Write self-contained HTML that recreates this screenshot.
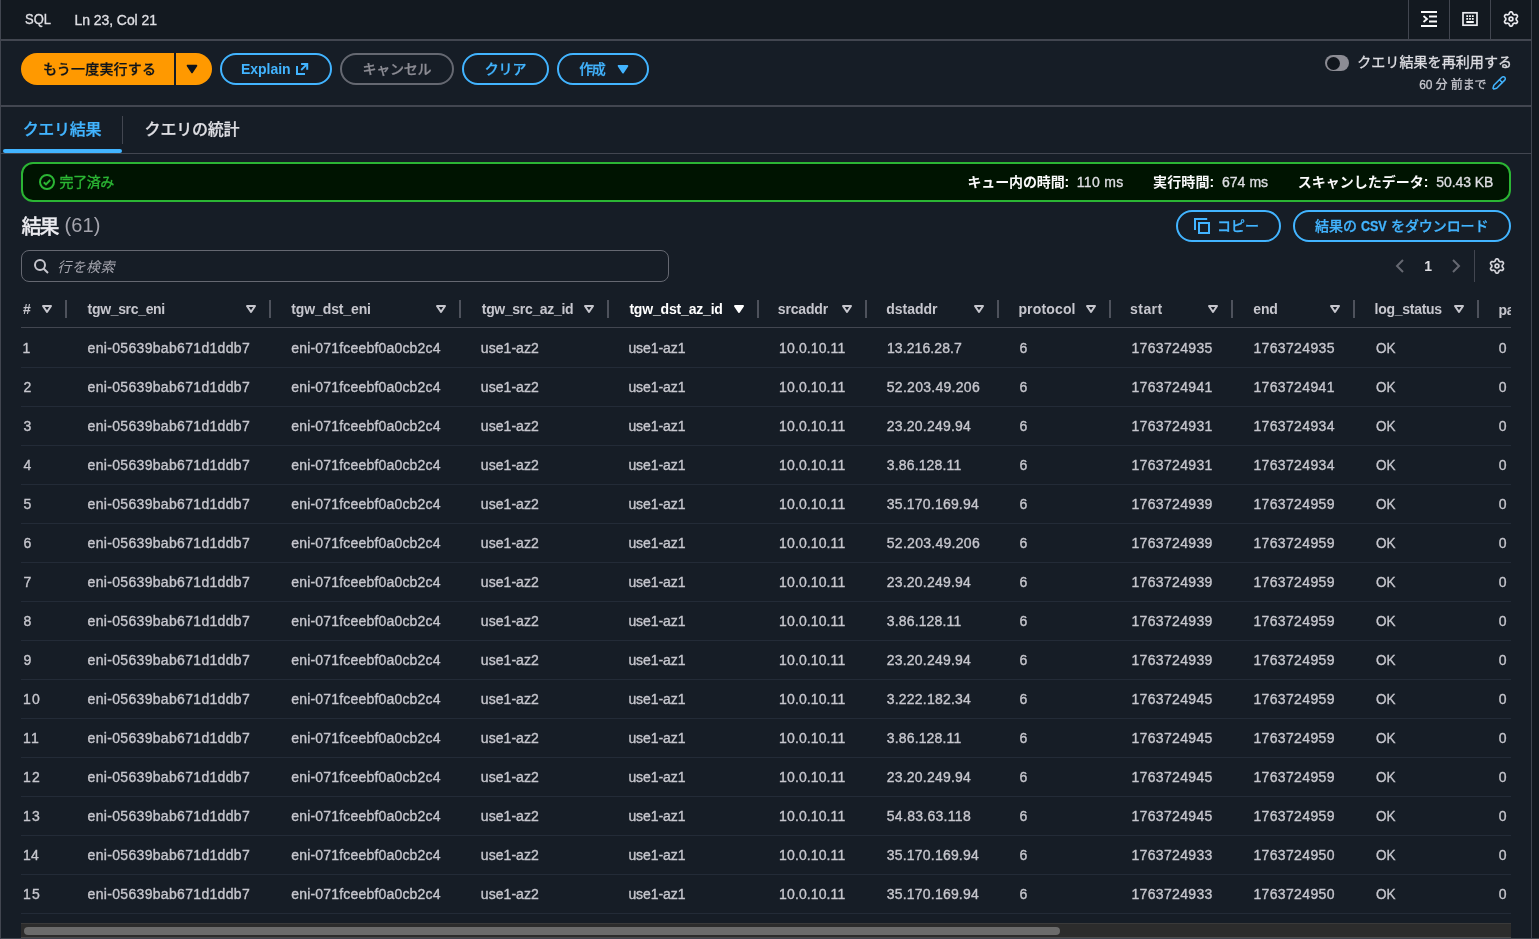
<!DOCTYPE html>
<html lang="ja">
<head>
<meta charset="utf-8">
<title>Athena</title>
<style>
*{box-sizing:border-box;margin:0;padding:0}
html,body{width:1539px;height:939px;overflow:hidden;background:#161d26}
body{font-family:"Liberation Sans","Noto Sans CJK JP",sans-serif;font-size:14px;color:#c6c6cd;position:relative}
.t{position:absolute;height:40px;line-height:40px;white-space:nowrap}
body{will-change:transform}
i{display:block;font-style:normal}
svg{position:absolute;overflow:visible}
#statusbar{position:absolute;left:0;top:0;width:1532px;height:41px;background:#131920;border-bottom:2px solid #424650}
.vs{position:absolute;top:0;width:1px;height:39px;background:#424650}
#leftb{position:absolute;left:0;top:0;width:1px;height:939px;background:#424650}
#rightb{position:absolute;left:1531px;top:0;width:1px;height:939px;background:#424650}
#rightpane{position:absolute;left:1532px;top:0;width:7px;height:939px;background:#131920}
.hl{position:absolute;left:1px;width:1530px;background:#424650}
.btn{position:absolute;height:32px;border:2px solid #42b4ff;border-radius:16px}
.btn.dis{border-color:#656871}
.btn.pri{background:#ff9900;border:0}
#tabul{position:absolute;left:3px;top:149px;width:119px;height:4px;border-radius:2px;background:#42b4ff}
#tabdv{position:absolute;left:122px;top:116px;width:1px;height:28px;background:#424650}
#toggle{position:absolute;left:1325px;top:55px;width:24px;height:16px;border-radius:8px;background:#8c8c94}
#toggle i{position:absolute;left:1.5px;top:1.5px;width:13px;height:13px;border-radius:7px;background:#11161d}
#flash{position:absolute;left:21px;top:162px;width:1490px;height:40px;border:2px solid #2bb534;border-radius:12px;background:#001401}
#search{position:absolute;left:21px;top:250px;width:648px;height:32px;border:1px solid #656871;border-radius:8px;background:#161d26}
#pgdv{position:absolute;left:1474px;top:250px;width:1px;height:32px;background:#424650}
#tablewrap{position:absolute;left:21px;top:290px;width:1490px;height:649px;overflow:hidden}
.thead{position:absolute;left:0;top:0;width:1490px;height:38px;border-bottom:1px solid #424650}
.caret{top:11px;width:16px;height:16px}
.dv{position:absolute;top:10px;width:2px;height:18px;background:#4e525c}
.tr{position:absolute;left:0;width:1490px;height:39px;border-bottom:1px solid #232b37}
.hscroll{position:absolute;left:0;top:633px;width:1490px;height:15px;background:#2c2c2c;border-top:1px solid #3a3a3a;border-bottom:1px solid #4a4a4a}
.hscroll i{position:absolute;left:3px;top:3px;width:1036px;height:8px;border-radius:4px;background:#6b6b6b}
#bottomb{position:absolute;left:0;top:938px;width:1539px;height:1px;background:#424650}
</style>
</head>
<body>
<div id="statusbar">
<i class="vs" style="left:1408px"></i><i class="vs" style="left:1449px"></i><i class="vs" style="left:1490px"></i>
<svg style="left:1421px;top:11px" width="16" height="16" viewBox="0 0 16 16" fill="none" stroke="#f9f9fa" stroke-width="2"><path d="M0 1h16M8 5.5h8M8 10.5h8M0 15h16"/><path d="M2.5 5l3.5 3-3.500 3" stroke-width="1.8"/></svg>
<svg style="left:1462px;top:11px" width="16" height="16" viewBox="0 0 16 16" fill="none" stroke="#f9f9fa" stroke-width="2"><rect x="1" y="1.800" width="14" height="12.400" stroke-width="1.700" stroke="#ebebf0"/><path d="M4.300 5.100h1.800M7.100 5.100h1.800M9.900 5.100h1.800M4.300 7.900h1.800M7.100 7.900h1.800M9.900 7.900h1.800M4.300 11h7.500" stroke-width="1.800"/></svg>
<svg style="left:1503px;top:11px" width="16" height="16" viewBox="0 0 16 16" fill="none" stroke="#ebebf0" stroke-width="1.7" stroke-linejoin="round"><path d="M13.20 8.00 L13.19 7.66 L13.20 7.32 L13.55 6.90 L13.94 6.41 L14.29 5.87 L14.52 5.30 L14.37 4.86 L14.15 4.45 L13.90 4.06 L13.60 3.70 L12.99 3.62 L12.35 3.65 L11.73 3.75 L11.19 3.84 L10.89 3.68 L10.60 3.50 L10.30 3.34 L10.01 3.16 L9.82 2.64 L9.59 2.06 L9.30 1.49 L8.92 1.00 L8.46 0.92 L8.00 0.90 L7.54 0.92 L7.08 1.00 L6.70 1.49 L6.41 2.06 L6.18 2.64 L5.99 3.16 L5.70 3.34 L5.40 3.50 L5.11 3.68 L4.81 3.84 L4.27 3.75 L3.65 3.65 L3.01 3.62 L2.40 3.70 L2.10 4.06 L1.85 4.45 L1.63 4.86 L1.48 5.30 L1.71 5.87 L2.06 6.41 L2.45 6.90 L2.80 7.32 L2.81 7.66 L2.80 8.00 L2.81 8.34 L2.80 8.68 L2.45 9.10 L2.06 9.59 L1.71 10.13 L1.48 10.70 L1.63 11.14 L1.85 11.55 L2.10 11.94 L2.40 12.30 L3.01 12.38 L3.65 12.35 L4.27 12.25 L4.81 12.16 L5.11 12.32 L5.40 12.50 L5.70 12.66 L5.99 12.84 L6.18 13.36 L6.41 13.94 L6.70 14.51 L7.08 15.00 L7.54 15.08 L8.00 15.10 L8.46 15.08 L8.92 15.00 L9.30 14.51 L9.59 13.94 L9.82 13.36 L10.01 12.84 L10.30 12.66 L10.60 12.50 L10.89 12.32 L11.19 12.16 L11.73 12.25 L12.35 12.35 L12.99 12.38 L13.60 12.30 L13.90 11.94 L14.15 11.55 L14.37 11.14 L14.52 10.70 L14.29 10.13 L13.94 9.59 L13.55 9.10 L13.20 8.68 L13.19 8.34Z"/><circle cx="8" cy="8" r="1.900"/></svg>
</div>
<div id="leftb"></div>
<i class="hl" style="top:105px;height:2px"></i>
<i class="hl" style="top:153px;height:1px"></i>
<div class="btn pri" style="left:21px;top:53px;width:153px;border-radius:16px 0 0 16px"></div>
<div class="btn pri" style="left:176px;top:53px;width:36px;border-radius:0 16px 16px 0"></div>
<svg style="left:184px;top:61px" width="16" height="16" viewBox="0 0 16 16"><path d="M3.700 4.700h8.600L8 11.300z" fill="#0f141a" stroke="#0f141a" stroke-width="2" stroke-linejoin="round"/></svg>
<div class="btn" style="left:220px;top:53px;width:112px"></div>
<svg style="left:294px;top:61px" width="16" height="16" viewBox="0 0 16 16" fill="none" stroke="#42b4ff" stroke-width="2"><path d="M3 5v8h8M7.100 3h6.100v5.800"/><path d="M7.200 9L13.200 3" stroke-width="1.8"/></svg>
<div class="btn dis" style="left:340px;top:53px;width:114px"></div>
<div class="btn" style="left:462px;top:53px;width:87px"></div>
<div class="btn" style="left:557px;top:53px;width:92px"></div>
<svg style="left:615px;top:61px" width="16" height="16" viewBox="0 0 16 16"><path d="M3.700 4.900h8.600L8 11.500z" fill="#42b4ff" stroke="#42b4ff" stroke-width="2" stroke-linejoin="round"/></svg>
<div id="toggle"><i></i></div>
<svg style="left:1491px;top:75px" width="16" height="16" viewBox="0 0 16 16" fill="none" stroke="#42b4ff" stroke-width="1.5" stroke-linejoin="round" stroke-linecap="round"><path d="M1.99 13.30L2.84 10.33L10.90 2.27A2.0 2.0 0 0 1 13.73 5.10L5.67 13.16L2.70 14.01Z"/><path d="M8.50 4.68L11.32 7.50" stroke-width="1.400"/></svg>
<div id="tabul"></div><div id="tabdv"></div>
<div id="flash"></div>
<svg style="left:39px;top:174px" width="16" height="16" viewBox="0 0 16 16" fill="none" stroke="#2bb534" stroke-width="2"><circle cx="8" cy="8" r="7"/><path d="M4.800 8.200l2.200 2.200 4.200-4.400"/></svg>
<div class="btn" style="left:1176px;top:210px;width:105px"></div>
<svg style="left:1194px;top:218px" width="16" height="16" viewBox="0 0 16 16" fill="none" stroke="#42b4ff" stroke-width="2"><path d="M5 5h10v10H5z"/><path d="M13.200 1H1v11"/></svg>
<div class="btn" style="left:1293px;top:210px;width:218px"></div>
<div id="search"></div>
<svg style="left:33px;top:258px" width="16" height="16" viewBox="0 0 16 16" fill="none" stroke="#c6c6cd" stroke-width="2"><circle cx="7" cy="7" r="5"/><path d="M15 15l-4.500-4.500"/></svg>
<svg style="left:1392px;top:258px" width="16" height="16" viewBox="0 0 16 16" fill="none" stroke="#656871" stroke-width="2"><path d="M11 2L5 8l6 6"/></svg>
<svg style="left:1448px;top:258px" width="16" height="16" viewBox="0 0 16 16" fill="none" stroke="#656871" stroke-width="2"><path d="M5 2l6 6-6 6"/></svg>
<div id="pgdv"></div>
<svg style="left:1489px;top:258px" width="16" height="16" viewBox="0 0 16 16" fill="none" stroke="#d5d5db" stroke-width="1.7" stroke-linejoin="round"><path d="M13.20 8.00 L13.19 7.66 L13.20 7.32 L13.55 6.90 L13.94 6.41 L14.29 5.87 L14.52 5.30 L14.37 4.86 L14.15 4.45 L13.90 4.06 L13.60 3.70 L12.99 3.62 L12.35 3.65 L11.73 3.75 L11.19 3.84 L10.89 3.68 L10.60 3.50 L10.30 3.34 L10.01 3.16 L9.82 2.64 L9.59 2.06 L9.30 1.49 L8.92 1.00 L8.46 0.92 L8.00 0.90 L7.54 0.92 L7.08 1.00 L6.70 1.49 L6.41 2.06 L6.18 2.64 L5.99 3.16 L5.70 3.34 L5.40 3.50 L5.11 3.68 L4.81 3.84 L4.27 3.75 L3.65 3.65 L3.01 3.62 L2.40 3.70 L2.10 4.06 L1.85 4.45 L1.63 4.86 L1.48 5.30 L1.71 5.87 L2.06 6.41 L2.45 6.90 L2.80 7.32 L2.81 7.66 L2.80 8.00 L2.81 8.34 L2.80 8.68 L2.45 9.10 L2.06 9.59 L1.71 10.13 L1.48 10.70 L1.63 11.14 L1.85 11.55 L2.10 11.94 L2.40 12.30 L3.01 12.38 L3.65 12.35 L4.27 12.25 L4.81 12.16 L5.11 12.32 L5.40 12.50 L5.70 12.66 L5.99 12.84 L6.18 13.36 L6.41 13.94 L6.70 14.51 L7.08 15.00 L7.54 15.08 L8.00 15.10 L8.46 15.08 L8.92 15.00 L9.30 14.51 L9.59 13.94 L9.82 13.36 L10.01 12.84 L10.30 12.66 L10.60 12.50 L10.89 12.32 L11.19 12.16 L11.73 12.25 L12.35 12.35 L12.99 12.38 L13.60 12.30 L13.90 11.94 L14.15 11.55 L14.37 11.14 L14.52 10.70 L14.29 10.13 L13.94 9.59 L13.55 9.10 L13.20 8.68 L13.19 8.34Z"/><circle cx="8" cy="8" r="1.900"/></svg>
<div id="rightpane"></div><div id="rightb"></div><div id="bottomb"></div>
<span class="t" style="left:25.4px;top:-0.8px;font-size:14px;-webkit-text-stroke:0.35px;color:#dedee3;transform:scaleX(0.929);transform-origin:0 50%;">SQL</span>
<span class="t" style="left:74.6px;top:0.2px;font-size:14px;-webkit-text-stroke:0.35px;color:#dedee3;letter-spacing:-0.08px;">Ln 23, Col 21</span>
<span class="t" style="left:43.0px;top:49.0px;font-size:14px;font-weight:500;-webkit-text-stroke:0.25px;color:#0f141a;letter-spacing:0.2px;">もう一度実行する</span>
<span class="t" style="left:241.0px;top:49.0px;font-size:14px;font-weight:bold;color:#42b4ff;letter-spacing:-0.03px;">Explain</span>
<span class="t" style="left:362.6px;top:48.5px;font-size:14px;font-weight:500;-webkit-text-stroke:0.25px;color:#8c8c94;letter-spacing:-0.3px;">キャンセル</span>
<span class="t" style="left:484.7px;top:49.0px;font-size:14px;font-weight:500;-webkit-text-stroke:0.25px;color:#42b4ff;letter-spacing:-0.1px;">クリア</span>
<span class="t" style="left:579.3px;top:49.0px;font-size:14px;font-weight:500;-webkit-text-stroke:0.25px;color:#42b4ff;letter-spacing:-1.5px;">作成</span>
<span class="t" style="left:1357.2px;top:42.2px;font-size:14px;-webkit-text-stroke:0.35px;color:#dedee3;letter-spacing:0.08px;">クエリ結果を再利用する</span>
<span class="t" style="left:1419.2px;top:64.8px;font-size:12px;-webkit-text-stroke:0.3px;color:#c6c6cd;letter-spacing:-0.09px;">60 分 前まで</span>
<span class="t" style="left:22.7px;top:110.4px;font-size:16px;font-weight:500;-webkit-text-stroke:0.25px;color:#42b4ff;letter-spacing:-0.32px;">クエリ結果</span>
<span class="t" style="left:144.6px;top:110.4px;font-size:16px;font-weight:500;-webkit-text-stroke:0.25px;color:#dedee3;letter-spacing:-0.2px;">クエリの統計</span>
<span class="t" style="left:59.6px;top:161.6px;font-size:14px;-webkit-text-stroke:0.35px;color:#2bb534;letter-spacing:-0.43px;">完了済み</span>
<span class="t" style="left:967.5px;top:162.0px;font-size:14px;font-weight:bold;color:#f9f9fa;letter-spacing:-0.14px;">キュー内の時間:</span>
<span class="t" style="left:1076.7px;top:162.0px;font-size:14px;-webkit-text-stroke:0.35px;color:#dedee3;letter-spacing:0.36px;">110 ms</span>
<span class="t" style="left:1153.1px;top:162.0px;font-size:14px;font-weight:bold;color:#f9f9fa;letter-spacing:0.1px;">実行時間:</span>
<span class="t" style="left:1221.9px;top:162.0px;font-size:14px;-webkit-text-stroke:0.35px;color:#dedee3;letter-spacing:0.06px;">674 ms</span>
<span class="t" style="left:1297.8px;top:162.0px;font-size:14px;font-weight:bold;color:#f9f9fa;letter-spacing:-0.01px;">スキャンしたデータ:</span>
<span class="t" style="left:1436.3px;top:162.0px;font-size:14px;-webkit-text-stroke:0.35px;color:#dedee3;letter-spacing:-0.07px;">50.43 KB</span>
<span class="t" style="left:21.5px;top:207.0px;font-size:20px;font-weight:500;-webkit-text-stroke:0.3px;color:#ebebf0;letter-spacing:-2.0px;">結果</span>
<span class="t" style="left:64.5px;top:205.0px;font-size:20px;color:#a4a4ad;letter-spacing:0.1px;">(61)</span>
<span class="t" style="left:1217.0px;top:205.5px;font-size:14px;font-weight:500;-webkit-text-stroke:0.25px;color:#42b4ff;letter-spacing:-0.05px;">コピー</span>
<span class="t" style="left:1315.0px;top:206.0px;font-size:14px;font-weight:500;-webkit-text-stroke:0.25px;color:#42b4ff;">結果の</span>
<span class="t" style="left:1361.3px;top:206.0px;font-size:14px;font-weight:bold;-webkit-text-stroke:0.3px;color:#42b4ff;transform:scaleX(0.893);transform-origin:0 50%;">CSV</span>
<span class="t" style="left:1391.0px;top:206.0px;font-size:14px;font-weight:500;-webkit-text-stroke:0.25px;color:#42b4ff;letter-spacing:-0.08px;">をダウンロード</span>
<span class="t" style="left:1424.2px;top:246.3px;font-size:14px;font-weight:bold;color:#dedee3;">1</span>
<span class="t" style="left:57.3px;top:247.0px;font-size:14px;font-style:italic;color:#a4a4ad;letter-spacing:0.37px;">行を検索</span>
<div id="tablewrap">
<div class="thead">
<span class="t" style="left:1.9px;top:-1.0px;font-size:14px;font-weight:bold;color:#c6c6cd;">#</span><svg class="caret" style="left:17.9px" viewBox="0 0 16 16"><path d="M4 5h8l-4 6z" fill="none" stroke="#c6c6cd" stroke-width="2" stroke-linejoin="round"/></svg><i class="dv" style="left:44px"></i>
<span class="t" style="left:66.6px;top:-1.0px;font-size:14px;font-weight:bold;color:#c6c6cd;letter-spacing:-0.33px;">tgw_src_eni</span><svg class="caret" style="left:222.0px" viewBox="0 0 16 16"><path d="M4 5h8l-4 6z" fill="none" stroke="#c6c6cd" stroke-width="2" stroke-linejoin="round"/></svg><i class="dv" style="left:248px"></i>
<span class="t" style="left:270.3px;top:-1.0px;font-size:14px;font-weight:bold;color:#c6c6cd;letter-spacing:-0.12px;">tgw_dst_eni</span><svg class="caret" style="left:412.0px" viewBox="0 0 16 16"><path d="M4 5h8l-4 6z" fill="none" stroke="#c6c6cd" stroke-width="2" stroke-linejoin="round"/></svg><i class="dv" style="left:438px"></i>
<span class="t" style="left:460.8px;top:-1.0px;font-size:14px;font-weight:bold;color:#c6c6cd;letter-spacing:-0.33px;">tgw_src_az_id</span><svg class="caret" style="left:560.0px" viewBox="0 0 16 16"><path d="M4 5h8l-4 6z" fill="none" stroke="#c6c6cd" stroke-width="2" stroke-linejoin="round"/></svg><i class="dv" style="left:586px"></i>
<span class="t" style="left:608.4px;top:-1.0px;font-size:14px;font-weight:bold;color:#fff;letter-spacing:-0.18px;">tgw_dst_az_id</span><svg class="caret" style="left:710.0px" viewBox="0 0 16 16"><path d="M4 5h8l-4 6z" fill="#fff" stroke="#fff" stroke-width="2" stroke-linejoin="round"/></svg><i class="dv" style="left:736px"></i>
<span class="t" style="left:756.8px;top:-1.0px;font-size:14px;font-weight:bold;color:#c6c6cd;letter-spacing:-0.18px;">srcaddr</span><svg class="caret" style="left:817.7px" viewBox="0 0 16 16"><path d="M4 5h8l-4 6z" fill="none" stroke="#c6c6cd" stroke-width="2" stroke-linejoin="round"/></svg><i class="dv" style="left:844px"></i>
<span class="t" style="left:865.2px;top:-1.0px;font-size:14px;font-weight:bold;color:#c6c6cd;letter-spacing:-0.02px;">dstaddr</span><svg class="caret" style="left:949.8px" viewBox="0 0 16 16"><path d="M4 5h8l-4 6z" fill="none" stroke="#c6c6cd" stroke-width="2" stroke-linejoin="round"/></svg><i class="dv" style="left:976px"></i>
<span class="t" style="left:997.4px;top:-1.0px;font-size:14px;font-weight:bold;color:#c6c6cd;letter-spacing:0.16px;">protocol</span><svg class="caret" style="left:1062.1px" viewBox="0 0 16 16"><path d="M4 5h8l-4 6z" fill="none" stroke="#c6c6cd" stroke-width="2" stroke-linejoin="round"/></svg><i class="dv" style="left:1088px"></i>
<span class="t" style="left:1109.1px;top:-1.0px;font-size:14px;font-weight:bold;color:#c6c6cd;letter-spacing:0.43px;">start</span><svg class="caret" style="left:1183.9px" viewBox="0 0 16 16"><path d="M4 5h8l-4 6z" fill="none" stroke="#c6c6cd" stroke-width="2" stroke-linejoin="round"/></svg><i class="dv" style="left:1210px"></i>
<span class="t" style="left:1232.3px;top:-1.0px;font-size:14px;font-weight:bold;color:#c6c6cd;letter-spacing:-0.2px;">end</span><svg class="caret" style="left:1305.9px" viewBox="0 0 16 16"><path d="M4 5h8l-4 6z" fill="none" stroke="#c6c6cd" stroke-width="2" stroke-linejoin="round"/></svg><i class="dv" style="left:1332px"></i>
<span class="t" style="left:1353.6px;top:-1.0px;font-size:14px;font-weight:bold;color:#c6c6cd;letter-spacing:-0.28px;">log_status</span><svg class="caret" style="left:1429.8px" viewBox="0 0 16 16"><path d="M4 5h8l-4 6z" fill="none" stroke="#c6c6cd" stroke-width="2" stroke-linejoin="round"/></svg><i class="dv" style="left:1456px"></i>
<span class="t" style="left:1477.5px;top:-0.3px;font-size:14px;font-weight:bold;color:#c6c6cd;letter-spacing:-0.3px">pa</span>
</div>
<div class="tr" style="top:39px"><span class="t" style="left:1.4px;top:-0.8px;font-size:14px;-webkit-text-stroke:0.35px;color:#c6c6cd;">1</span><span class="t" style="left:66.6px;top:-0.8px;font-size:14px;-webkit-text-stroke:0.35px;color:#c6c6cd;letter-spacing:0.32px;">eni-05639bab671d1ddb7</span><span class="t" style="left:270.3px;top:-0.8px;font-size:14px;-webkit-text-stroke:0.35px;color:#c6c6cd;letter-spacing:0.18px;">eni-071fceebf0a0cb2c4</span><span class="t" style="left:459.8px;top:-0.8px;font-size:14px;-webkit-text-stroke:0.35px;color:#c6c6cd;letter-spacing:0.06px;">use1-az2</span><span class="t" style="left:607.4px;top:-0.8px;font-size:14px;-webkit-text-stroke:0.35px;color:#c6c6cd;letter-spacing:-0.06px;">use1-az1</span><span class="t" style="left:758.1px;top:-0.8px;font-size:14px;-webkit-text-stroke:0.35px;color:#c6c6cd;letter-spacing:0.11px;">10.0.10.11</span><span class="t" style="left:866.0px;top:-0.8px;font-size:14px;-webkit-text-stroke:0.35px;color:#c6c6cd;letter-spacing:0.08px;">13.216.28.7</span><span class="t" style="left:998.4px;top:-0.8px;font-size:14px;-webkit-text-stroke:0.35px;color:#c6c6cd;">6</span><span class="t" style="left:1110.4px;top:-0.8px;font-size:14px;-webkit-text-stroke:0.35px;color:#c6c6cd;letter-spacing:0.34px;">1763724935</span><span class="t" style="left:1232.4px;top:-0.8px;font-size:14px;-webkit-text-stroke:0.35px;color:#c6c6cd;letter-spacing:0.36px;">1763724935</span><span class="t" style="left:1354.6px;top:-0.8px;font-size:14px;-webkit-text-stroke:0.35px;color:#c6c6cd;transform:scaleX(0.965);transform-origin:0 50%;">OK</span><span class="t" style="left:1477.8px;top:-0.8px;font-size:14px;-webkit-text-stroke:0.35px;color:#c6c6cd;">0</span></div>
<div class="tr" style="top:78px"><span class="t" style="left:2.4px;top:-0.8px;font-size:14px;-webkit-text-stroke:0.35px;color:#c6c6cd;">2</span><span class="t" style="left:66.6px;top:-0.8px;font-size:14px;-webkit-text-stroke:0.35px;color:#c6c6cd;letter-spacing:0.32px;">eni-05639bab671d1ddb7</span><span class="t" style="left:270.3px;top:-0.8px;font-size:14px;-webkit-text-stroke:0.35px;color:#c6c6cd;letter-spacing:0.18px;">eni-071fceebf0a0cb2c4</span><span class="t" style="left:459.8px;top:-0.8px;font-size:14px;-webkit-text-stroke:0.35px;color:#c6c6cd;letter-spacing:0.06px;">use1-az2</span><span class="t" style="left:607.4px;top:-0.8px;font-size:14px;-webkit-text-stroke:0.35px;color:#c6c6cd;letter-spacing:-0.06px;">use1-az1</span><span class="t" style="left:758.1px;top:-0.8px;font-size:14px;-webkit-text-stroke:0.35px;color:#c6c6cd;letter-spacing:0.11px;">10.0.10.11</span><span class="t" style="left:865.8px;top:-0.8px;font-size:14px;-webkit-text-stroke:0.35px;color:#c6c6cd;letter-spacing:0.28px;">52.203.49.206</span><span class="t" style="left:998.4px;top:-0.8px;font-size:14px;-webkit-text-stroke:0.35px;color:#c6c6cd;">6</span><span class="t" style="left:1110.4px;top:-0.8px;font-size:14px;-webkit-text-stroke:0.35px;color:#c6c6cd;letter-spacing:0.34px;">1763724941</span><span class="t" style="left:1232.4px;top:-0.8px;font-size:14px;-webkit-text-stroke:0.35px;color:#c6c6cd;letter-spacing:0.36px;">1763724941</span><span class="t" style="left:1354.6px;top:-0.8px;font-size:14px;-webkit-text-stroke:0.35px;color:#c6c6cd;transform:scaleX(0.965);transform-origin:0 50%;">OK</span><span class="t" style="left:1477.8px;top:-0.8px;font-size:14px;-webkit-text-stroke:0.35px;color:#c6c6cd;">0</span></div>
<div class="tr" style="top:117px"><span class="t" style="left:2.4px;top:-0.8px;font-size:14px;-webkit-text-stroke:0.35px;color:#c6c6cd;">3</span><span class="t" style="left:66.6px;top:-0.8px;font-size:14px;-webkit-text-stroke:0.35px;color:#c6c6cd;letter-spacing:0.32px;">eni-05639bab671d1ddb7</span><span class="t" style="left:270.3px;top:-0.8px;font-size:14px;-webkit-text-stroke:0.35px;color:#c6c6cd;letter-spacing:0.18px;">eni-071fceebf0a0cb2c4</span><span class="t" style="left:459.8px;top:-0.8px;font-size:14px;-webkit-text-stroke:0.35px;color:#c6c6cd;letter-spacing:0.06px;">use1-az2</span><span class="t" style="left:607.4px;top:-0.8px;font-size:14px;-webkit-text-stroke:0.35px;color:#c6c6cd;letter-spacing:-0.06px;">use1-az1</span><span class="t" style="left:758.1px;top:-0.8px;font-size:14px;-webkit-text-stroke:0.35px;color:#c6c6cd;letter-spacing:0.11px;">10.0.10.11</span><span class="t" style="left:865.8px;top:-0.8px;font-size:14px;-webkit-text-stroke:0.35px;color:#c6c6cd;letter-spacing:0.2px;">23.20.249.94</span><span class="t" style="left:998.4px;top:-0.8px;font-size:14px;-webkit-text-stroke:0.35px;color:#c6c6cd;">6</span><span class="t" style="left:1110.4px;top:-0.8px;font-size:14px;-webkit-text-stroke:0.35px;color:#c6c6cd;letter-spacing:0.34px;">1763724931</span><span class="t" style="left:1232.4px;top:-0.8px;font-size:14px;-webkit-text-stroke:0.35px;color:#c6c6cd;letter-spacing:0.36px;">1763724934</span><span class="t" style="left:1354.6px;top:-0.8px;font-size:14px;-webkit-text-stroke:0.35px;color:#c6c6cd;transform:scaleX(0.965);transform-origin:0 50%;">OK</span><span class="t" style="left:1477.8px;top:-0.8px;font-size:14px;-webkit-text-stroke:0.35px;color:#c6c6cd;">0</span></div>
<div class="tr" style="top:156px"><span class="t" style="left:2.4px;top:-0.8px;font-size:14px;-webkit-text-stroke:0.35px;color:#c6c6cd;">4</span><span class="t" style="left:66.6px;top:-0.8px;font-size:14px;-webkit-text-stroke:0.35px;color:#c6c6cd;letter-spacing:0.32px;">eni-05639bab671d1ddb7</span><span class="t" style="left:270.3px;top:-0.8px;font-size:14px;-webkit-text-stroke:0.35px;color:#c6c6cd;letter-spacing:0.18px;">eni-071fceebf0a0cb2c4</span><span class="t" style="left:459.8px;top:-0.8px;font-size:14px;-webkit-text-stroke:0.35px;color:#c6c6cd;letter-spacing:0.06px;">use1-az2</span><span class="t" style="left:607.4px;top:-0.8px;font-size:14px;-webkit-text-stroke:0.35px;color:#c6c6cd;letter-spacing:-0.06px;">use1-az1</span><span class="t" style="left:758.1px;top:-0.8px;font-size:14px;-webkit-text-stroke:0.35px;color:#c6c6cd;letter-spacing:0.11px;">10.0.10.11</span><span class="t" style="left:865.8px;top:-0.8px;font-size:14px;-webkit-text-stroke:0.35px;color:#c6c6cd;letter-spacing:0.15px;">3.86.128.11</span><span class="t" style="left:998.4px;top:-0.8px;font-size:14px;-webkit-text-stroke:0.35px;color:#c6c6cd;">6</span><span class="t" style="left:1110.4px;top:-0.8px;font-size:14px;-webkit-text-stroke:0.35px;color:#c6c6cd;letter-spacing:0.34px;">1763724931</span><span class="t" style="left:1232.4px;top:-0.8px;font-size:14px;-webkit-text-stroke:0.35px;color:#c6c6cd;letter-spacing:0.36px;">1763724934</span><span class="t" style="left:1354.6px;top:-0.8px;font-size:14px;-webkit-text-stroke:0.35px;color:#c6c6cd;transform:scaleX(0.965);transform-origin:0 50%;">OK</span><span class="t" style="left:1477.8px;top:-0.8px;font-size:14px;-webkit-text-stroke:0.35px;color:#c6c6cd;">0</span></div>
<div class="tr" style="top:195px"><span class="t" style="left:2.4px;top:-0.8px;font-size:14px;-webkit-text-stroke:0.35px;color:#c6c6cd;">5</span><span class="t" style="left:66.6px;top:-0.8px;font-size:14px;-webkit-text-stroke:0.35px;color:#c6c6cd;letter-spacing:0.32px;">eni-05639bab671d1ddb7</span><span class="t" style="left:270.3px;top:-0.8px;font-size:14px;-webkit-text-stroke:0.35px;color:#c6c6cd;letter-spacing:0.18px;">eni-071fceebf0a0cb2c4</span><span class="t" style="left:459.8px;top:-0.8px;font-size:14px;-webkit-text-stroke:0.35px;color:#c6c6cd;letter-spacing:0.06px;">use1-az2</span><span class="t" style="left:607.4px;top:-0.8px;font-size:14px;-webkit-text-stroke:0.35px;color:#c6c6cd;letter-spacing:-0.06px;">use1-az1</span><span class="t" style="left:758.1px;top:-0.8px;font-size:14px;-webkit-text-stroke:0.35px;color:#c6c6cd;letter-spacing:0.11px;">10.0.10.11</span><span class="t" style="left:865.8px;top:-0.8px;font-size:14px;-webkit-text-stroke:0.35px;color:#c6c6cd;letter-spacing:0.2px;">35.170.169.94</span><span class="t" style="left:998.4px;top:-0.8px;font-size:14px;-webkit-text-stroke:0.35px;color:#c6c6cd;">6</span><span class="t" style="left:1110.4px;top:-0.8px;font-size:14px;-webkit-text-stroke:0.35px;color:#c6c6cd;letter-spacing:0.34px;">1763724939</span><span class="t" style="left:1232.4px;top:-0.8px;font-size:14px;-webkit-text-stroke:0.35px;color:#c6c6cd;letter-spacing:0.36px;">1763724959</span><span class="t" style="left:1354.6px;top:-0.8px;font-size:14px;-webkit-text-stroke:0.35px;color:#c6c6cd;transform:scaleX(0.965);transform-origin:0 50%;">OK</span><span class="t" style="left:1477.8px;top:-0.8px;font-size:14px;-webkit-text-stroke:0.35px;color:#c6c6cd;">0</span></div>
<div class="tr" style="top:234px"><span class="t" style="left:2.4px;top:-0.8px;font-size:14px;-webkit-text-stroke:0.35px;color:#c6c6cd;">6</span><span class="t" style="left:66.6px;top:-0.8px;font-size:14px;-webkit-text-stroke:0.35px;color:#c6c6cd;letter-spacing:0.32px;">eni-05639bab671d1ddb7</span><span class="t" style="left:270.3px;top:-0.8px;font-size:14px;-webkit-text-stroke:0.35px;color:#c6c6cd;letter-spacing:0.18px;">eni-071fceebf0a0cb2c4</span><span class="t" style="left:459.8px;top:-0.8px;font-size:14px;-webkit-text-stroke:0.35px;color:#c6c6cd;letter-spacing:0.06px;">use1-az2</span><span class="t" style="left:607.4px;top:-0.8px;font-size:14px;-webkit-text-stroke:0.35px;color:#c6c6cd;letter-spacing:-0.06px;">use1-az1</span><span class="t" style="left:758.1px;top:-0.8px;font-size:14px;-webkit-text-stroke:0.35px;color:#c6c6cd;letter-spacing:0.11px;">10.0.10.11</span><span class="t" style="left:865.8px;top:-0.8px;font-size:14px;-webkit-text-stroke:0.35px;color:#c6c6cd;letter-spacing:0.28px;">52.203.49.206</span><span class="t" style="left:998.4px;top:-0.8px;font-size:14px;-webkit-text-stroke:0.35px;color:#c6c6cd;">6</span><span class="t" style="left:1110.4px;top:-0.8px;font-size:14px;-webkit-text-stroke:0.35px;color:#c6c6cd;letter-spacing:0.34px;">1763724939</span><span class="t" style="left:1232.4px;top:-0.8px;font-size:14px;-webkit-text-stroke:0.35px;color:#c6c6cd;letter-spacing:0.36px;">1763724959</span><span class="t" style="left:1354.6px;top:-0.8px;font-size:14px;-webkit-text-stroke:0.35px;color:#c6c6cd;transform:scaleX(0.965);transform-origin:0 50%;">OK</span><span class="t" style="left:1477.8px;top:-0.8px;font-size:14px;-webkit-text-stroke:0.35px;color:#c6c6cd;">0</span></div>
<div class="tr" style="top:273px"><span class="t" style="left:2.4px;top:-0.8px;font-size:14px;-webkit-text-stroke:0.35px;color:#c6c6cd;">7</span><span class="t" style="left:66.6px;top:-0.8px;font-size:14px;-webkit-text-stroke:0.35px;color:#c6c6cd;letter-spacing:0.32px;">eni-05639bab671d1ddb7</span><span class="t" style="left:270.3px;top:-0.8px;font-size:14px;-webkit-text-stroke:0.35px;color:#c6c6cd;letter-spacing:0.18px;">eni-071fceebf0a0cb2c4</span><span class="t" style="left:459.8px;top:-0.8px;font-size:14px;-webkit-text-stroke:0.35px;color:#c6c6cd;letter-spacing:0.06px;">use1-az2</span><span class="t" style="left:607.4px;top:-0.8px;font-size:14px;-webkit-text-stroke:0.35px;color:#c6c6cd;letter-spacing:-0.06px;">use1-az1</span><span class="t" style="left:758.1px;top:-0.8px;font-size:14px;-webkit-text-stroke:0.35px;color:#c6c6cd;letter-spacing:0.11px;">10.0.10.11</span><span class="t" style="left:865.8px;top:-0.8px;font-size:14px;-webkit-text-stroke:0.35px;color:#c6c6cd;letter-spacing:0.2px;">23.20.249.94</span><span class="t" style="left:998.4px;top:-0.8px;font-size:14px;-webkit-text-stroke:0.35px;color:#c6c6cd;">6</span><span class="t" style="left:1110.4px;top:-0.8px;font-size:14px;-webkit-text-stroke:0.35px;color:#c6c6cd;letter-spacing:0.34px;">1763724939</span><span class="t" style="left:1232.4px;top:-0.8px;font-size:14px;-webkit-text-stroke:0.35px;color:#c6c6cd;letter-spacing:0.36px;">1763724959</span><span class="t" style="left:1354.6px;top:-0.8px;font-size:14px;-webkit-text-stroke:0.35px;color:#c6c6cd;transform:scaleX(0.965);transform-origin:0 50%;">OK</span><span class="t" style="left:1477.8px;top:-0.8px;font-size:14px;-webkit-text-stroke:0.35px;color:#c6c6cd;">0</span></div>
<div class="tr" style="top:312px"><span class="t" style="left:2.4px;top:-0.8px;font-size:14px;-webkit-text-stroke:0.35px;color:#c6c6cd;">8</span><span class="t" style="left:66.6px;top:-0.8px;font-size:14px;-webkit-text-stroke:0.35px;color:#c6c6cd;letter-spacing:0.32px;">eni-05639bab671d1ddb7</span><span class="t" style="left:270.3px;top:-0.8px;font-size:14px;-webkit-text-stroke:0.35px;color:#c6c6cd;letter-spacing:0.18px;">eni-071fceebf0a0cb2c4</span><span class="t" style="left:459.8px;top:-0.8px;font-size:14px;-webkit-text-stroke:0.35px;color:#c6c6cd;letter-spacing:0.06px;">use1-az2</span><span class="t" style="left:607.4px;top:-0.8px;font-size:14px;-webkit-text-stroke:0.35px;color:#c6c6cd;letter-spacing:-0.06px;">use1-az1</span><span class="t" style="left:758.1px;top:-0.8px;font-size:14px;-webkit-text-stroke:0.35px;color:#c6c6cd;letter-spacing:0.11px;">10.0.10.11</span><span class="t" style="left:865.8px;top:-0.8px;font-size:14px;-webkit-text-stroke:0.35px;color:#c6c6cd;letter-spacing:0.15px;">3.86.128.11</span><span class="t" style="left:998.4px;top:-0.8px;font-size:14px;-webkit-text-stroke:0.35px;color:#c6c6cd;">6</span><span class="t" style="left:1110.4px;top:-0.8px;font-size:14px;-webkit-text-stroke:0.35px;color:#c6c6cd;letter-spacing:0.34px;">1763724939</span><span class="t" style="left:1232.4px;top:-0.8px;font-size:14px;-webkit-text-stroke:0.35px;color:#c6c6cd;letter-spacing:0.36px;">1763724959</span><span class="t" style="left:1354.6px;top:-0.8px;font-size:14px;-webkit-text-stroke:0.35px;color:#c6c6cd;transform:scaleX(0.965);transform-origin:0 50%;">OK</span><span class="t" style="left:1477.8px;top:-0.8px;font-size:14px;-webkit-text-stroke:0.35px;color:#c6c6cd;">0</span></div>
<div class="tr" style="top:351px"><span class="t" style="left:2.4px;top:-0.8px;font-size:14px;-webkit-text-stroke:0.35px;color:#c6c6cd;">9</span><span class="t" style="left:66.6px;top:-0.8px;font-size:14px;-webkit-text-stroke:0.35px;color:#c6c6cd;letter-spacing:0.32px;">eni-05639bab671d1ddb7</span><span class="t" style="left:270.3px;top:-0.8px;font-size:14px;-webkit-text-stroke:0.35px;color:#c6c6cd;letter-spacing:0.18px;">eni-071fceebf0a0cb2c4</span><span class="t" style="left:459.8px;top:-0.8px;font-size:14px;-webkit-text-stroke:0.35px;color:#c6c6cd;letter-spacing:0.06px;">use1-az2</span><span class="t" style="left:607.4px;top:-0.8px;font-size:14px;-webkit-text-stroke:0.35px;color:#c6c6cd;letter-spacing:-0.06px;">use1-az1</span><span class="t" style="left:758.1px;top:-0.8px;font-size:14px;-webkit-text-stroke:0.35px;color:#c6c6cd;letter-spacing:0.11px;">10.0.10.11</span><span class="t" style="left:865.8px;top:-0.8px;font-size:14px;-webkit-text-stroke:0.35px;color:#c6c6cd;letter-spacing:0.2px;">23.20.249.94</span><span class="t" style="left:998.4px;top:-0.8px;font-size:14px;-webkit-text-stroke:0.35px;color:#c6c6cd;">6</span><span class="t" style="left:1110.4px;top:-0.8px;font-size:14px;-webkit-text-stroke:0.35px;color:#c6c6cd;letter-spacing:0.34px;">1763724939</span><span class="t" style="left:1232.4px;top:-0.8px;font-size:14px;-webkit-text-stroke:0.35px;color:#c6c6cd;letter-spacing:0.36px;">1763724959</span><span class="t" style="left:1354.6px;top:-0.8px;font-size:14px;-webkit-text-stroke:0.35px;color:#c6c6cd;transform:scaleX(0.965);transform-origin:0 50%;">OK</span><span class="t" style="left:1477.8px;top:-0.8px;font-size:14px;-webkit-text-stroke:0.35px;color:#c6c6cd;">0</span></div>
<div class="tr" style="top:390px"><span class="t" style="left:2.0px;top:-0.8px;font-size:14px;-webkit-text-stroke:0.35px;color:#c6c6cd;letter-spacing:1.2px;">10</span><span class="t" style="left:66.6px;top:-0.8px;font-size:14px;-webkit-text-stroke:0.35px;color:#c6c6cd;letter-spacing:0.32px;">eni-05639bab671d1ddb7</span><span class="t" style="left:270.3px;top:-0.8px;font-size:14px;-webkit-text-stroke:0.35px;color:#c6c6cd;letter-spacing:0.18px;">eni-071fceebf0a0cb2c4</span><span class="t" style="left:459.8px;top:-0.8px;font-size:14px;-webkit-text-stroke:0.35px;color:#c6c6cd;letter-spacing:0.06px;">use1-az2</span><span class="t" style="left:607.4px;top:-0.8px;font-size:14px;-webkit-text-stroke:0.35px;color:#c6c6cd;letter-spacing:-0.06px;">use1-az1</span><span class="t" style="left:758.1px;top:-0.8px;font-size:14px;-webkit-text-stroke:0.35px;color:#c6c6cd;letter-spacing:0.11px;">10.0.10.11</span><span class="t" style="left:865.8px;top:-0.8px;font-size:14px;-webkit-text-stroke:0.35px;color:#c6c6cd;letter-spacing:0.2px;">3.222.182.34</span><span class="t" style="left:998.4px;top:-0.8px;font-size:14px;-webkit-text-stroke:0.35px;color:#c6c6cd;">6</span><span class="t" style="left:1110.4px;top:-0.8px;font-size:14px;-webkit-text-stroke:0.35px;color:#c6c6cd;letter-spacing:0.34px;">1763724945</span><span class="t" style="left:1232.4px;top:-0.8px;font-size:14px;-webkit-text-stroke:0.35px;color:#c6c6cd;letter-spacing:0.36px;">1763724959</span><span class="t" style="left:1354.6px;top:-0.8px;font-size:14px;-webkit-text-stroke:0.35px;color:#c6c6cd;transform:scaleX(0.965);transform-origin:0 50%;">OK</span><span class="t" style="left:1477.8px;top:-0.8px;font-size:14px;-webkit-text-stroke:0.35px;color:#c6c6cd;">0</span></div>
<div class="tr" style="top:429px"><span class="t" style="left:2.0px;top:-0.8px;font-size:14px;-webkit-text-stroke:0.35px;color:#c6c6cd;letter-spacing:1.3px;">11</span><span class="t" style="left:66.6px;top:-0.8px;font-size:14px;-webkit-text-stroke:0.35px;color:#c6c6cd;letter-spacing:0.32px;">eni-05639bab671d1ddb7</span><span class="t" style="left:270.3px;top:-0.8px;font-size:14px;-webkit-text-stroke:0.35px;color:#c6c6cd;letter-spacing:0.18px;">eni-071fceebf0a0cb2c4</span><span class="t" style="left:459.8px;top:-0.8px;font-size:14px;-webkit-text-stroke:0.35px;color:#c6c6cd;letter-spacing:0.06px;">use1-az2</span><span class="t" style="left:607.4px;top:-0.8px;font-size:14px;-webkit-text-stroke:0.35px;color:#c6c6cd;letter-spacing:-0.06px;">use1-az1</span><span class="t" style="left:758.1px;top:-0.8px;font-size:14px;-webkit-text-stroke:0.35px;color:#c6c6cd;letter-spacing:0.11px;">10.0.10.11</span><span class="t" style="left:865.8px;top:-0.8px;font-size:14px;-webkit-text-stroke:0.35px;color:#c6c6cd;letter-spacing:0.15px;">3.86.128.11</span><span class="t" style="left:998.4px;top:-0.8px;font-size:14px;-webkit-text-stroke:0.35px;color:#c6c6cd;">6</span><span class="t" style="left:1110.4px;top:-0.8px;font-size:14px;-webkit-text-stroke:0.35px;color:#c6c6cd;letter-spacing:0.34px;">1763724945</span><span class="t" style="left:1232.4px;top:-0.8px;font-size:14px;-webkit-text-stroke:0.35px;color:#c6c6cd;letter-spacing:0.36px;">1763724959</span><span class="t" style="left:1354.6px;top:-0.8px;font-size:14px;-webkit-text-stroke:0.35px;color:#c6c6cd;transform:scaleX(0.965);transform-origin:0 50%;">OK</span><span class="t" style="left:1477.8px;top:-0.8px;font-size:14px;-webkit-text-stroke:0.35px;color:#c6c6cd;">0</span></div>
<div class="tr" style="top:468px"><span class="t" style="left:2.0px;top:-0.8px;font-size:14px;-webkit-text-stroke:0.35px;color:#c6c6cd;letter-spacing:1.2px;">12</span><span class="t" style="left:66.6px;top:-0.8px;font-size:14px;-webkit-text-stroke:0.35px;color:#c6c6cd;letter-spacing:0.32px;">eni-05639bab671d1ddb7</span><span class="t" style="left:270.3px;top:-0.8px;font-size:14px;-webkit-text-stroke:0.35px;color:#c6c6cd;letter-spacing:0.18px;">eni-071fceebf0a0cb2c4</span><span class="t" style="left:459.8px;top:-0.8px;font-size:14px;-webkit-text-stroke:0.35px;color:#c6c6cd;letter-spacing:0.06px;">use1-az2</span><span class="t" style="left:607.4px;top:-0.8px;font-size:14px;-webkit-text-stroke:0.35px;color:#c6c6cd;letter-spacing:-0.06px;">use1-az1</span><span class="t" style="left:758.1px;top:-0.8px;font-size:14px;-webkit-text-stroke:0.35px;color:#c6c6cd;letter-spacing:0.11px;">10.0.10.11</span><span class="t" style="left:865.8px;top:-0.8px;font-size:14px;-webkit-text-stroke:0.35px;color:#c6c6cd;letter-spacing:0.2px;">23.20.249.94</span><span class="t" style="left:998.4px;top:-0.8px;font-size:14px;-webkit-text-stroke:0.35px;color:#c6c6cd;">6</span><span class="t" style="left:1110.4px;top:-0.8px;font-size:14px;-webkit-text-stroke:0.35px;color:#c6c6cd;letter-spacing:0.34px;">1763724945</span><span class="t" style="left:1232.4px;top:-0.8px;font-size:14px;-webkit-text-stroke:0.35px;color:#c6c6cd;letter-spacing:0.36px;">1763724959</span><span class="t" style="left:1354.6px;top:-0.8px;font-size:14px;-webkit-text-stroke:0.35px;color:#c6c6cd;transform:scaleX(0.965);transform-origin:0 50%;">OK</span><span class="t" style="left:1477.8px;top:-0.8px;font-size:14px;-webkit-text-stroke:0.35px;color:#c6c6cd;">0</span></div>
<div class="tr" style="top:507px"><span class="t" style="left:2.0px;top:-0.8px;font-size:14px;-webkit-text-stroke:0.35px;color:#c6c6cd;letter-spacing:1.2px;">13</span><span class="t" style="left:66.6px;top:-0.8px;font-size:14px;-webkit-text-stroke:0.35px;color:#c6c6cd;letter-spacing:0.32px;">eni-05639bab671d1ddb7</span><span class="t" style="left:270.3px;top:-0.8px;font-size:14px;-webkit-text-stroke:0.35px;color:#c6c6cd;letter-spacing:0.18px;">eni-071fceebf0a0cb2c4</span><span class="t" style="left:459.8px;top:-0.8px;font-size:14px;-webkit-text-stroke:0.35px;color:#c6c6cd;letter-spacing:0.06px;">use1-az2</span><span class="t" style="left:607.4px;top:-0.8px;font-size:14px;-webkit-text-stroke:0.35px;color:#c6c6cd;letter-spacing:-0.06px;">use1-az1</span><span class="t" style="left:758.1px;top:-0.8px;font-size:14px;-webkit-text-stroke:0.35px;color:#c6c6cd;letter-spacing:0.11px;">10.0.10.11</span><span class="t" style="left:865.8px;top:-0.8px;font-size:14px;-webkit-text-stroke:0.35px;color:#c6c6cd;letter-spacing:0.29px;">54.83.63.118</span><span class="t" style="left:998.4px;top:-0.8px;font-size:14px;-webkit-text-stroke:0.35px;color:#c6c6cd;">6</span><span class="t" style="left:1110.4px;top:-0.8px;font-size:14px;-webkit-text-stroke:0.35px;color:#c6c6cd;letter-spacing:0.34px;">1763724945</span><span class="t" style="left:1232.4px;top:-0.8px;font-size:14px;-webkit-text-stroke:0.35px;color:#c6c6cd;letter-spacing:0.36px;">1763724959</span><span class="t" style="left:1354.6px;top:-0.8px;font-size:14px;-webkit-text-stroke:0.35px;color:#c6c6cd;transform:scaleX(0.965);transform-origin:0 50%;">OK</span><span class="t" style="left:1477.8px;top:-0.8px;font-size:14px;-webkit-text-stroke:0.35px;color:#c6c6cd;">0</span></div>
<div class="tr" style="top:546px"><span class="t" style="left:2.0px;top:-0.8px;font-size:14px;-webkit-text-stroke:0.35px;color:#c6c6cd;letter-spacing:0.2px;">14</span><span class="t" style="left:66.6px;top:-0.8px;font-size:14px;-webkit-text-stroke:0.35px;color:#c6c6cd;letter-spacing:0.32px;">eni-05639bab671d1ddb7</span><span class="t" style="left:270.3px;top:-0.8px;font-size:14px;-webkit-text-stroke:0.35px;color:#c6c6cd;letter-spacing:0.18px;">eni-071fceebf0a0cb2c4</span><span class="t" style="left:459.8px;top:-0.8px;font-size:14px;-webkit-text-stroke:0.35px;color:#c6c6cd;letter-spacing:0.06px;">use1-az2</span><span class="t" style="left:607.4px;top:-0.8px;font-size:14px;-webkit-text-stroke:0.35px;color:#c6c6cd;letter-spacing:-0.06px;">use1-az1</span><span class="t" style="left:758.1px;top:-0.8px;font-size:14px;-webkit-text-stroke:0.35px;color:#c6c6cd;letter-spacing:0.11px;">10.0.10.11</span><span class="t" style="left:865.8px;top:-0.8px;font-size:14px;-webkit-text-stroke:0.35px;color:#c6c6cd;letter-spacing:0.2px;">35.170.169.94</span><span class="t" style="left:998.4px;top:-0.8px;font-size:14px;-webkit-text-stroke:0.35px;color:#c6c6cd;">6</span><span class="t" style="left:1110.4px;top:-0.8px;font-size:14px;-webkit-text-stroke:0.35px;color:#c6c6cd;letter-spacing:0.34px;">1763724933</span><span class="t" style="left:1232.4px;top:-0.8px;font-size:14px;-webkit-text-stroke:0.35px;color:#c6c6cd;letter-spacing:0.36px;">1763724950</span><span class="t" style="left:1354.6px;top:-0.8px;font-size:14px;-webkit-text-stroke:0.35px;color:#c6c6cd;transform:scaleX(0.965);transform-origin:0 50%;">OK</span><span class="t" style="left:1477.8px;top:-0.8px;font-size:14px;-webkit-text-stroke:0.35px;color:#c6c6cd;">0</span></div>
<div class="tr" style="top:585px"><span class="t" style="left:2.0px;top:-0.8px;font-size:14px;-webkit-text-stroke:0.35px;color:#c6c6cd;letter-spacing:1.2px;">15</span><span class="t" style="left:66.6px;top:-0.8px;font-size:14px;-webkit-text-stroke:0.35px;color:#c6c6cd;letter-spacing:0.32px;">eni-05639bab671d1ddb7</span><span class="t" style="left:270.3px;top:-0.8px;font-size:14px;-webkit-text-stroke:0.35px;color:#c6c6cd;letter-spacing:0.18px;">eni-071fceebf0a0cb2c4</span><span class="t" style="left:459.8px;top:-0.8px;font-size:14px;-webkit-text-stroke:0.35px;color:#c6c6cd;letter-spacing:0.06px;">use1-az2</span><span class="t" style="left:607.4px;top:-0.8px;font-size:14px;-webkit-text-stroke:0.35px;color:#c6c6cd;letter-spacing:-0.06px;">use1-az1</span><span class="t" style="left:758.1px;top:-0.8px;font-size:14px;-webkit-text-stroke:0.35px;color:#c6c6cd;letter-spacing:0.11px;">10.0.10.11</span><span class="t" style="left:865.8px;top:-0.8px;font-size:14px;-webkit-text-stroke:0.35px;color:#c6c6cd;letter-spacing:0.2px;">35.170.169.94</span><span class="t" style="left:998.4px;top:-0.8px;font-size:14px;-webkit-text-stroke:0.35px;color:#c6c6cd;">6</span><span class="t" style="left:1110.4px;top:-0.8px;font-size:14px;-webkit-text-stroke:0.35px;color:#c6c6cd;letter-spacing:0.34px;">1763724933</span><span class="t" style="left:1232.4px;top:-0.8px;font-size:14px;-webkit-text-stroke:0.35px;color:#c6c6cd;letter-spacing:0.36px;">1763724950</span><span class="t" style="left:1354.6px;top:-0.8px;font-size:14px;-webkit-text-stroke:0.35px;color:#c6c6cd;transform:scaleX(0.965);transform-origin:0 50%;">OK</span><span class="t" style="left:1477.8px;top:-0.8px;font-size:14px;-webkit-text-stroke:0.35px;color:#c6c6cd;">0</span></div>
<div class="hscroll"><i></i></div>
</div>
</body>
</html>
